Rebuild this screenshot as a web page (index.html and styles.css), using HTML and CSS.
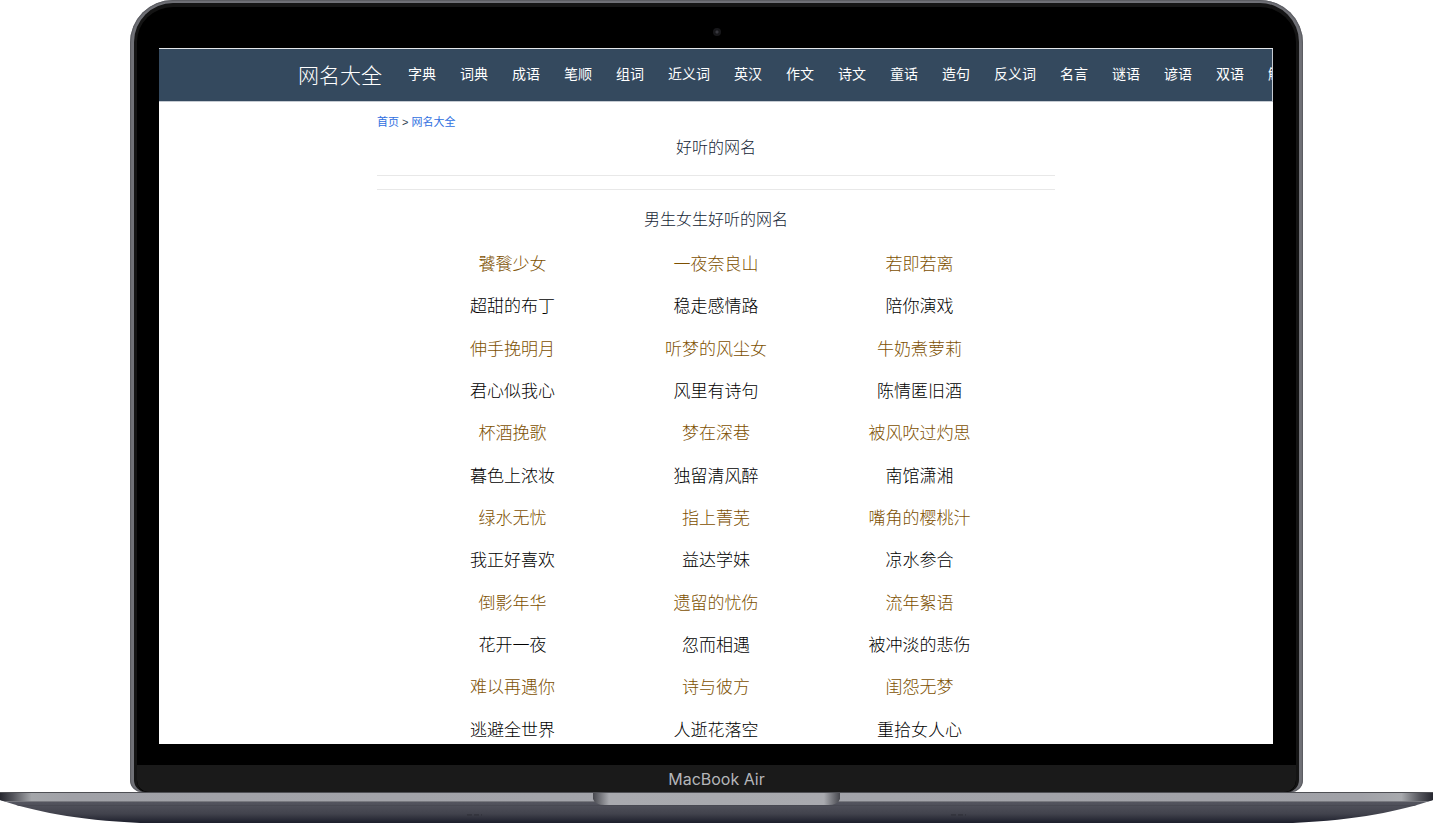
FILE: index.html
```
<!DOCTYPE html>
<html lang="zh-CN">
<head>
<meta charset="utf-8">
<title>网名大全</title>
<link rel="stylesheet" href="styles.css">
</head>
<body>
<div class="laptop">
  <div class="lid">
    <div class="bezel">
      <div class="camera-bar"><span class="camera"></span></div>
      <div class="screen">
        <header class="site-header">
          <a class="brand" href="#">网名大全</a>
          <nav class="menu">
            <a href="#">字典</a><a href="#">词典</a><a href="#">成语</a><a href="#">笔顺</a><a href="#">组词</a><a href="#">近义词</a><a href="#">英汉</a><a href="#">作文</a><a href="#">诗文</a><a href="#">童话</a><a href="#">造句</a><a href="#">反义词</a><a href="#">名言</a><a href="#">谜语</a><a href="#">谚语</a><a href="#">双语</a><a href="#">解</a>
          </nav>
        </header>
        <main class="content">
          <div class="crumbs"><a href="#">首页</a> &gt; <a href="#">网名大全</a></div>
          <h1 class="title">好听的网名</h1>
          <div class="divider"></div>
          <h2 class="subtitle">男生女生好听的网名</h2>
          <table class="names">
            <tbody>
            <tr><td>饕餮少女</td><td>一夜奈良山</td><td>若即若离</td></tr>
            <tr><td>超甜的布丁</td><td>稳走感情路</td><td>陪你演戏</td></tr>
            <tr><td>伸手挽明月</td><td>听梦的风尘女</td><td>牛奶煮萝莉</td></tr>
            <tr><td>君心似我心</td><td>风里有诗句</td><td>陈情匿旧酒</td></tr>
            <tr><td>杯酒挽歌</td><td>梦在深巷</td><td>被风吹过灼思</td></tr>
            <tr><td>暮色上浓妆</td><td>独留清风醉</td><td>南馆潇湘</td></tr>
            <tr><td>绿水无忧</td><td>指上菁芜</td><td>嘴角的樱桃汁</td></tr>
            <tr><td>我正好喜欢</td><td>益达学妹</td><td>凉水参合</td></tr>
            <tr><td>倒影年华</td><td>遗留的忧伤</td><td>流年絮语</td></tr>
            <tr><td>花开一夜</td><td>忽而相遇</td><td>被冲淡的悲伤</td></tr>
            <tr><td>难以再遇你</td><td>诗与彼方</td><td>闺怨无梦</td></tr>
            <tr><td>逃避全世界</td><td>人逝花落空</td><td>重拾女人心</td></tr>
            </tbody>
          </table>
        </main>
      </div>
      <div class="chin">MacBook Air</div>
    </div>
  </div>
  <svg class="base" viewBox="0 0 1433 31" preserveAspectRatio="none" aria-hidden="true">
    <defs>
      <linearGradient id="under" x1="0" y1="0" x2="0" y2="1">
        <stop offset="0" stop-color="#5c5d65"/><stop offset=".3" stop-color="#555660"/><stop offset=".7" stop-color="#42434d"/><stop offset="1" stop-color="#1c1e2b"/>
      </linearGradient>
      <linearGradient id="deck" x1="0" y1="0" x2="1" y2="0">
        <stop offset="0" stop-color="#26272f"/><stop offset=".009" stop-color="#53545b"/><stop offset=".022" stop-color="#a4a6aa"/><stop offset=".05" stop-color="#a0a1a7"/><stop offset=".5" stop-color="#a4a5ab"/><stop offset=".95" stop-color="#a0a1a7"/><stop offset=".978" stop-color="#a8aaae"/><stop offset=".991" stop-color="#53545b"/><stop offset="1" stop-color="#26272f"/>
      </linearGradient>
      <linearGradient id="notch" x1="0" y1="0" x2="1" y2="0">
        <stop offset="0" stop-color="#46474d"/><stop offset=".02" stop-color="#65666c"/><stop offset=".065" stop-color="#a9aaaf"/><stop offset=".5" stop-color="#a8a9ae"/><stop offset=".935" stop-color="#a9aaaf"/><stop offset=".98" stop-color="#65666c"/><stop offset="1" stop-color="#46474d"/>
      </linearGradient>
      <clipPath id="hull"><path d="M0 0H1433V8C1400 19 1358 28 1293 31H140C75 28 33 19 0 8Z"/></clipPath>
    </defs>
    <g clip-path="url(#hull)">
      <rect width="1433" height="31" fill="url(#under)"/>
      <rect width="1433" height="9" fill="url(#deck)"/>
      <rect width="1433" height="1" fill="#4f5055"/>
      <rect y="9" width="1433" height="1" fill="#77787e"/>
      <rect y="13" width="1433" height="1" fill="#484952"/>
    </g>
    <path d="M593 1H840V7Q838 13 828 13H605Q595 13 593 7Z" fill="url(#notch)"/>
    <path d="M467 23h15M951 23h15" stroke="#34353e" stroke-width="2" stroke-dasharray="5 2"/>
  </svg>
</div>
</body>
</html>
```
FILE: styles.css
```
* { box-sizing: border-box; }
body {
  margin: 0;
  background: #fff;
  color: #2c3e50;
  font-family: "Liberation Sans", "Noto Sans CJK SC", sans-serif;
  font-weight: 300;
}
a { color: inherit; text-decoration: none; }
.laptop {
  display: flex;
  flex-direction: column;
  height: 100vh;
  overflow: hidden;
}
.lid {
  flex: 1;
  min-height: 0;
  margin: 0 130px;
  padding: 3px 4px 0;
  border-radius: 43px 43px 12px 12px;
  background: #707177;
  box-shadow: inset 0 0 1px 1px #5a5b60;
}
.bezel {
  display: flex;
  flex-direction: column;
  height: 100%;
  border: solid #141414;
  border-width: 4px 3px 0;
  border-radius: 39px 39px 12px 12px;
  background: #000;
  overflow: hidden;
}
.camera-bar {
  display: flex;
  flex: none;
  align-items: center;
  justify-content: center;
  height: 41px;
  padding-top: 8px;
}
.camera {
  width: 8px;
  height: 8px;
  border-radius: 50%;
  background: radial-gradient(circle, #38383e 0 1px, #17171a 2px 100%);
}
.screen {
  flex: 1;
  min-height: 0;
  margin: 0 23px 21px 22px;
  border-top: 1px solid #e4e6e9;
  background: #fff;
  overflow: hidden;
}
.site-header {
  display: flex;
  align-items: center;
  gap: 26px;
  height: 53px;
  padding: 0 0 2px 139px;
  border: solid #c5cbd2;
  border-width: 0 1px 1px 0;
  background: #34495e;
  color: #fff;
  white-space: nowrap;
  overflow: hidden;
}
.brand { flex: none; font-size: 21px; }
.menu {
  display: flex;
  flex: none;
  gap: 24px;
  padding-bottom: 3px;
  font-size: 14px;
  font-weight: 400;
}
.content {
  padding: 11px 218px 0;
}
.crumbs {
  font-size: 11px;
  font-weight: 400;
  line-height: 18px;
}
.crumbs a { color: #2f6fdf; }
.title, .subtitle {
  margin: 0;
  color: #142434;
  font-size: 16px;
  font-weight: 300;
  line-height: 24px;
  text-align: center;
}
.title { padding: 3px 0 13px; line-height: 28px; }
.divider {
  height: 15px;
  border: solid #e8e8e8;
  border-width: 1px 0;
}
.subtitle { padding: 18px 0 12px; }
.names {
  width: 90%;
  margin: 0 auto;
  border-collapse: collapse;
  table-layout: fixed;
  color: #000;
  font-size: 17px;
  line-height: 24px;
  text-align: center;
}
.names tr { height: 42px; }
.names tr:nth-child(3n) { height: 43px; }
.names tr:nth-child(odd) { color: #7d5000; }
.names td { padding: 0; }
.chin {
  flex: none;
  height: 27px;
  padding-top: 1px;
  border-radius: 0 0 12px 12px;
  background: #1a1a1a;
  color: #b4b5b9;
  font-family: Inter, "Liberation Sans", sans-serif;
  font-size: 16px;
  font-weight: 400;
  line-height: 26px;
  text-align: center;
}
.base {
  display: block;
  flex: none;
  width: 100%;
  height: 31px;
}
```
